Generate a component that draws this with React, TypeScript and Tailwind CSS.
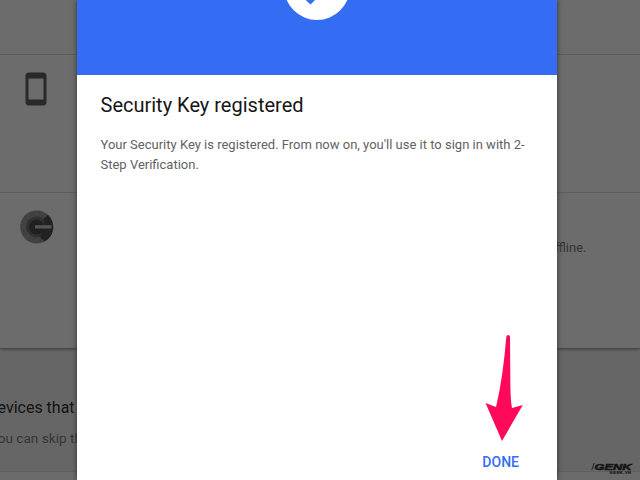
import React from "react";

function PhoneIcon() {
  return (
    <svg width="36" height="36" viewBox="0 0 24 24" className="shrink-0">
      <path fill="#292929" d="M17 1H7c-1.1 0-2 .9-2 2v18c0 1.1.9 2 2 2h10c1.1 0 2-.9 2-2V3c0-1.1-.9-2-2-2zm0 18H7V5h10v14z" />
    </svg>
  );
}

function AuthenticatorIcon() {
  return (
    <svg width="34" height="34" viewBox="0 0 34 34" className="shrink-0">
      <circle cx="16.7" cy="17" r="16.5" fill="#414141" />
      <path d="M17 17L24 8.5L28 5A16.5 16.5 0 0 1 24.5 31.6L16 23Z" fill="#222222" />
      <path d="M24 9.5A10.5 10.5 0 1 0 19.5 27L25 17Z" fill="#303030" />
      <circle cx="16.5" cy="17" r="7.5" fill="#202020" />
      <rect x="15" y="15.2" width="16.5" height="3.4" rx=".5" fill="#565656" />
      <g fill="#4b4b4b">
        <circle cx="17" cy="4" r=".8" />
        <circle cx="8" cy="8" r=".8" />
        <circle cx="4" cy="17" r=".8" />
        <circle cx="8" cy="26" r=".8" />
        <circle cx="17" cy="30" r=".8" />
      </g>
    </svg>
  );
}

function Watermark() {
  return (
    <div className="absolute left-[591px] top-[461px] w-[44px] leading-none">
      <svg width="44" height="13" viewBox="0 0 44 13" className="block overflow-visible">
        <path d="M.8 9L3.2 2" stroke="#222" strokeWidth="1" />
        <text x="3.5" y="8.5" fontFamily="'Liberation Sans', sans-serif" fontSize="9" fontWeight="900" fontStyle="italic" textLength="37" lengthAdjust="spacingAndGlyphs" fill="#161616" stroke="#161616" strokeWidth=".6">GENK</text>
        <text x="18.5" y="13.2" fontFamily="'Liberation Sans', sans-serif" fontSize="4" fontWeight="700" textLength="21.5" lengthAdjust="spacing" fill="#1c1c1c" stroke="#1c1c1c" strokeWidth=".2">GENK.VN</text>
      </svg>
    </div>
  );
}

function Background() {
  return (
    <div className="flex h-full flex-col">
      <section className="z-10 flex h-[348px] flex-col bg-[#6c6c6c] shadow-[0_1px_3px_#383838]">
        <div className="h-[55px] border-b border-[#5d5d5d]" />
        <div className="h-[138px] border-b border-[#5d5d5d] pl-[18px] pt-[15.5px]">
          <PhoneIcon />
        </div>
        <div className="flex grow items-start justify-between pl-[20px] pr-[53.5px] pt-[17px]">
          <AuthenticatorIcon />
          <p className="mt-[28px] text-[13px] leading-5 text-[#353535]">offline.</p>
        </div>
      </section>
      <section className="h-[123px] whitespace-nowrap bg-[#666666] pt-[48px]">
        <h2 className="-ml-[13px] text-[16px] leading-6 text-[#131313]">Devices that</h2>
        <p className="-ml-[10px] mt-[8px] text-[13.6px] leading-5 text-[#353535]">You can skip the</p>
      </section>
      <section className="grow border-t border-[#606060] bg-[#6b6b6b]" />
    </div>
  );
}

function Dialog() {
  return (
    <div role="dialog" className="absolute left-[76.5px] top-0 z-20 flex h-[480px] w-[480px] flex-col bg-white shadow-[0_0_5px_#303030]">
      <header className="flex h-[75px] justify-center overflow-hidden bg-[#346df3]">
        <svg width="66" height="66" viewBox="0 0 66 66" className="-mt-[46px] shrink-0">
          <circle cx="33" cy="33" r="33" fill="white" />
          <path d="M16 37.5L26.5 47L49 24.5" fill="none" stroke="#346df3" strokeWidth="5" />
        </svg>
      </header>
      <div className="grow px-6 pt-[16px]">
        <h1 className="text-[20px] leading-7 text-[#161616]">Security Key registered</h1>
        <p className="mt-[16px] text-[13px] leading-5 text-[#626262]">Your Security Key is registered. From now on, you'll use it to sign in with 2-<br />Step Verification.</p>
      </div>
      <footer className="flex h-[147px] flex-col items-end pr-[33px]">
        <svg width="38" height="108" viewBox="0 0 38 108" className="mr-[1px] block">
          <path d="M21.3 3.8Q21.5 2 23.3 2Q25 2 25 3.8L25.4 55Q25.6 67 27 75L37.8 72L17 108L0.5 70L11 74Q18 45 21.3 3.8Z" fill="#ff0a5a" />
        </svg>
        <button className="mr-[4.5px] mt-[11px] text-[14px] font-medium leading-5 text-[#346df3]">DONE</button>
      </footer>
    </div>
  );
}

export default function App() {
  return (
    <main className="relative h-[480px] w-[640px] overflow-hidden font-['Roboto',sans-serif]">
      <Background />
      <Dialog />
      <Watermark />
    </main>
  );
}
